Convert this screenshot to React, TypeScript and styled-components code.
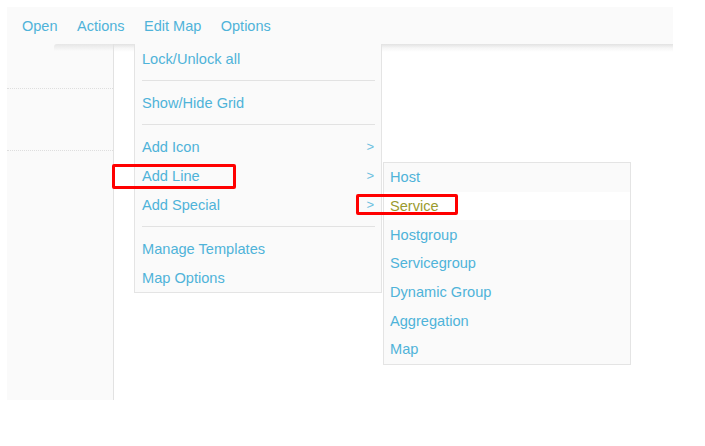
import React from "react";
import styled, { createGlobalStyle } from "styled-components";

const Global = createGlobalStyle`
  html, body { margin: 0; padding: 0; background: #ffffff; }
  body { font-family: "Liberation Sans", Arial, sans-serif; font-size: 14.5px; }
`;

const BLUE = "#4fb3d9";

const Frame = styled.div`
  position: relative;
  width: 666px;
  margin: 7px;
`;

const TopBar = styled.nav`
  display: flex;
  align-items: center;
  gap: 19.5px;
  height: 37px;
  padding-left: 15px;
  background: #fafafa;
`;

const TopItem = styled.span`
  color: ${BLUE};
  font-size: 14.5px;
`;

const Body = styled.div`
  display: grid;
  grid-template-columns: 107px 1fr;
  height: 356px;
`;

const Sidebar = styled.aside`
  position: relative;
  background: #fafafa;
  border-right: 1px solid #e2e2e2;
  &::before {
    content: "";
    position: absolute;
    left: 47px;
    right: 0;
    top: 0;
    height: 7px;
    border-top-left-radius: 3px;
    background: linear-gradient(#e6e6e6, rgba(250, 250, 250, 0));
  }
`;

const SideBlock = styled.div<{ $h: number }>`
  height: ${(p) => p.$h}px;
  border-bottom: 1px dotted #dedede;
  box-sizing: border-box;
`;

const Main = styled.main`
  background: #ffffff linear-gradient(#e2e2e2, #f6f6f6 4px, #ffffff 8px) no-repeat;
  background-size: 100% 9px;
`;

const Menu = styled.ul`
  position: absolute;
  left: 127px;
  top: 37px;
  width: 248px;
  margin: 0;
  padding: 0;
  list-style: none;
  background: #fafafa;
  border: 1px solid #e4e4e4;
  border-top: none;
  box-sizing: border-box;
`;

const SubMenu = styled(Menu)`
  left: 376px;
  top: 155px;
  width: 248px;
  border-top: 1px solid #e4e4e4;
`;

const Item = styled.li<{ $active?: boolean }>`
  display: flex;
  align-items: center;
  justify-content: space-between;
  height: 29px;
  padding: 0 7px 0 7px;
  font-size: 14.6px;
  color: ${(p) => (p.$active ? "#9b9b2f" : BLUE)};
  background: ${(p) => (p.$active ? "#ffffff" : "transparent")};
`;

const SubItem = styled(Item)`
  height: 28.7px;
  padding-left: 6px;
`;

const Arrow = styled.span`
  color: #6cc0e0;
  font-size: 13px;
`;

const Sep = styled.li`
  height: 1px;
  margin: 7px 6px 7px 7px;
  background: #e2e2e2;
`;

const Highlight = styled.div<{ $x: number; $y: number; $w: number; $h: number }>`
  position: absolute;
  left: ${(p) => p.$x}px;
  top: ${(p) => p.$y}px;
  width: ${(p) => p.$w}px;
  height: ${(p) => p.$h}px;
  border: 3px solid #ff0000;
  border-radius: 2px;
  box-sizing: border-box;
`;

export default function App() {
  return (
    <>
      <Global />
      <Frame>
        <TopBar>
          <TopItem>Open</TopItem>
          <TopItem>Actions</TopItem>
          <TopItem>Edit Map</TopItem>
          <TopItem>Options</TopItem>
        </TopBar>
        <Body>
          <Sidebar>
            <SideBlock $h={45} />
            <SideBlock $h={62} />
          </Sidebar>
          <Main />
        </Body>
        <Menu>
          <Item>Lock/Unlock all</Item>
          <Sep />
          <Item>Show/Hide Grid</Item>
          <Sep />
          <Item>
            Add Icon<Arrow>&gt;</Arrow>
          </Item>
          <Item>
            Add Line<Arrow>&gt;</Arrow>
          </Item>
          <Item>
            Add Special<Arrow>&gt;</Arrow>
          </Item>
          <Sep />
          <Item>Manage Templates</Item>
          <Item>Map Options</Item>
        </Menu>
        <SubMenu>
          <SubItem>Host</SubItem>
          <SubItem $active>Service</SubItem>
          <SubItem>Hostgroup</SubItem>
          <SubItem>Servicegroup</SubItem>
          <SubItem>Dynamic Group</SubItem>
          <SubItem>Aggregation</SubItem>
          <SubItem>Map</SubItem>
        </SubMenu>
        <Highlight $x={105} $y={157} $w={124} $h={25} />
        <Highlight $x={349} $y={187} $w={102} $h={21} />
      </Frame>
    </>
  );
}
